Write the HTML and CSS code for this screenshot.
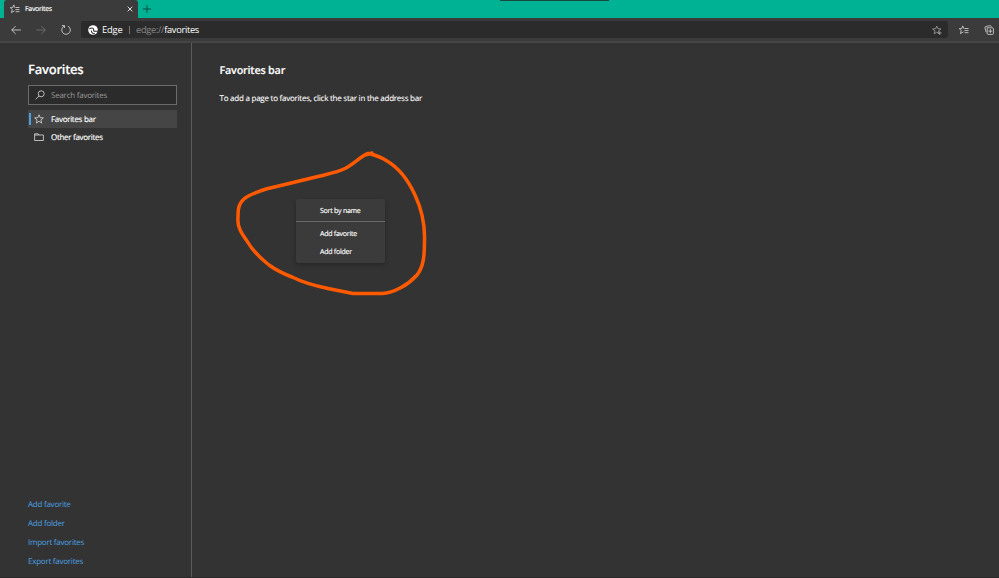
FILE: index.html
```html
<!DOCTYPE html>
<html lang="en">
<head>
<meta charset="utf-8">
<title>Favorites</title>
<link rel="stylesheet" href="styles.css">
</head>
<body>
<svg class="defs" width="0" height="0">
  <symbol id="star" viewBox="0 0 10 10"><path d="M5 .8 6.2 3.7 9.4 3.9 6.9 5.9 7.7 9.1 5 7.3 2.3 9.1 3.1 5.9.6 3.9 3.8 3.7Z"/></symbol>
  <symbol id="favs" viewBox="0 0 10 10"><path d="M5.2 3.6H4.8L3.7.9 2.7 3.6.3 3.7 2.2 5.5 1.5 8.6 4.5 6.8M5.6 3.5H9.5M5.4 5.6H9.5M5.6 7.7H9.5"/></symbol>
</svg>
<header class="tabstrip">
  <div class="tab">
    <svg class="tab-icon"><use href="#favs"/></svg>
    <span class="tab-title">Favorites</span>
    <svg class="close" viewBox="0 0 6 6"><path d="M.7.7 5.3 5.3M5.3.7.7 5.3"/></svg>
  </div>
  <svg class="plus" viewBox="0 0 8 8"><path d="M4 0V8M0 4H8"/></svg>
  <div class="handle"></div>
</header>
<nav class="toolbar">
  <svg class="nav" viewBox="0 0 10 10"><path d="M9.8 5H.7M4.6 1.1.7 5 4.6 8.9"/></svg>
  <svg class="nav dim" viewBox="0 0 10 10"><path d="M.2 5H9.3M5.4 1.1 9.3 5 5.4 8.9"/></svg>
  <svg class="nav" viewBox="0 0 10 10"><path d="M3.2 1.1A4.3 4.3 0 1 0 6.9 1.1M.9.6H3.5V3"/></svg>
  <div class="address">
    <svg class="edge" viewBox="0 0 10 10"><circle cx="5" cy="5" r="4.8"/><path d="M9.9 6.2H6.3Q5.3 5.8 5.7 4.6 5.4 3 4 3 2.6 3 1.4 4M3.4 5.6C3.3 7.5 4.7 8.7 6.7 8.5"/></svg>
    <span class="brand">Edge</span>
    <span class="divider"></span>
    <span class="url"><span class="scheme">edge://</span>favorites</span>
    <svg class="add-star" viewBox="0 0 10 10"><use href="#star" width="9.5" height="10"/><path d="M6 8H9.6M7.8 6.3V9.8"/></svg>
  </div>
  <svg class="tool"><use href="#favs"/></svg>
  <svg class="tool collections" viewBox="0 0 10 10"><path d="M3.2 2.8H8.4Q9.4 2.8 9.4 3.8V8.4Q9.4 9.4 8.4 9.4H4.2Q3.2 9.4 3.2 8.4ZM2.2 7.3 1 3Q.7 1.8 1.8 1.5L6.2.6Q7 .6 7.3 1.8M6.3 4.2V8M4.4 6.1H8.2"/></svg>
</nav>
<main class="page">
  <aside class="sidebar">
    <h1>Favorites</h1>
    <div class="search">
      <svg viewBox="0 0 10 10"><circle cx="6.2" cy="3.8" r="3"/><path d="M4 6 .6 9.4"/></svg>
      <span>Search favorites</span>
    </div>
    <div class="item selected"><svg><use href="#star"/></svg><span>Favorites bar</span></div>
    <div class="item"><svg viewBox="0 0 10 10"><path d="M.6 1.8H4.1L5 3H9.4V8.5H.6ZM.6 3H5"/></svg><span>Other favorites</span></div>
    <div class="links"><a>Add favorite</a><a>Add folder</a><a>Import favorites</a><a>Export favorites</a></div>
  </aside>
  <section class="content">
    <h2>Favorites bar</h2>
    <p>To add a page to favorites, click the star in the address bar</p>
  </section>
</main>
<div class="menu">
  <div class="menu-sort">Sort by name</div>
  <div>Add favorite</div>
  <div>Add folder</div>
</div>
<svg class="scribble" viewBox="225 140 215 165"><path d="M372 153.5 368 153.5C361 156 354 164 345 168.5C338 172 328 174 320 176L287 184L266 189C257 192 248 195 244 199C238 204 238 211 238 218C237 227 242 234 247 241C252 250 259 257 269 265C276 270 284 274 292 277C304 283 316 286 328 288.5L353 293.5H382C394 293 408 285 417 275C424 266 424.5 255 424.5 239C425 221 421 208 415 195C409 182 399 168 387 161C381 157 375 155 369 153.5M367 154.5 372 153"/></svg>
</body>
</html>
```

FILE: styles.css
```css
* { box-sizing: border-box; }
body { margin: 0; width: 999px; height: 578px; overflow: hidden; background: #333; color: #fff; font: 8px/12px "Open Sans", "Noto Sans", sans-serif; text-rendering: geometricPrecision; letter-spacing: -.24px; display: flex; flex-direction: column; border-bottom: 1px solid #292929; }
svg { fill: none; stroke: #ddd; stroke-width: .8; flex: none; display: block; }
.defs { position: absolute; }
span, a, h1, h2, p, .menu div { white-space: nowrap; }
.tabstrip { height: 18px; flex: none; background: #00b294; display: flex; padding-left: 4px; position: relative; }
.tab { width: 134px; background: #3b3b3b; border-radius: 3px 3px 0 0; display: flex; align-items: center; padding: 0 5px 0 6px; }
.tab-icon { width: 10px; height: 10px; }
.tab-title { font-size: 7px; margin-left: 5px; padding-top: 2px; letter-spacing: -.3px; flex: 1; -webkit-text-stroke: .15px; }
.close { width: 6px; height: 6px; stroke-width: 1; }
.plus { width: 8px; height: 8px; margin: 5px 0 0 5px; stroke: #064b40; stroke-width: 1; }
.handle { position: absolute; left: 500px; top: 0; width: 109px; height: 1px; background: #17483f; }
.toolbar { height: 25px; flex: none; background: #3b3b3b; border-bottom: 2px solid #454545; display: flex; align-items: center; padding-left: 11px; }
.nav { width: 10px; height: 10px; margin-right: 15px; }
.nav:nth-child(3) { margin-right: 15px; }
.dim { stroke: #777; }
.address { width: 867px; height: 17px; margin-left: -5px; background: #2b2b2b; border-radius: 2px; display: flex; align-items: center; padding: 0 6px 0 7px; font-size: 9.3px; }
.brand, .url { padding-top: 1px; }
.edge { width: 10px; height: 10px; stroke: #2b2b2b; stroke-width: 1.1; }
.edge circle { fill: #fff; stroke: none; }
.brand { margin-left: 4px; width: 22px; letter-spacing: -.15px; }
.divider { width: 1px; height: 8px; background: #777; margin-left: 5px; }
.url { margin-left: 6px; flex: 1; letter-spacing: -.32px; }
.scheme { color: #888; }
.add-star { width: 10px; height: 10px; stroke: #aaa; }
.tool { width: 10px; height: 10px; margin-left: 11px; }
.collections { margin-left: 15px; }
.page { flex: 1; display: flex; min-height: 0; }
.sidebar { width: 192px; border-right: 1px solid #5a5a5a; padding: 17px 14px 6px 28px; display: flex; flex-direction: column; }
h1 { font-size: 13px; line-height: 18px; font-weight: 600; margin: 0 0 7px; -webkit-text-stroke: .15px; }
.search { height: 20px; border: 1px solid #6b6b6b; background: #2b2b2b; display: flex; align-items: center; padding-left: 6px; color: #999; margin-bottom: 5px; flex: none; }
.search svg { width: 10px; height: 10px; margin-right: 6px; }
.search span, .item span { padding-top: 2px; }
.item { height: 18px; display: flex; align-items: center; padding-left: 6px; position: relative; -webkit-text-stroke: .15px; letter-spacing: -.3px; }
.item svg { width: 10px; height: 10px; margin-right: 7px; }
.selected { background: #454545; }
.selected::before { content: ""; position: absolute; left: 1px; top: 3px; width: 2px; height: 12px; background: #4ba0e1; }
.links { margin-top: auto; display: flex; flex-direction: column; color: #4ba0e1; }
.links a { height: 19px; line-height: 19px; }
.content { padding: 19px 0 0 27.5px; }
h2 { margin: 0; font-size: 10.8px; line-height: 18px; font-weight: 600; letter-spacing: -.2px; -webkit-text-stroke: .15px; }
p { margin: 13px 0 0; line-height: 12px; -webkit-text-stroke: .1px; }
.menu { position: absolute; left: 296px; top: 199px; width: 89px; height: 64px; background: #3b3b3b; border-radius: 2px; box-shadow: 0 2px 5px #0004; padding-top: 3px; font-size: 7px; -webkit-text-stroke: .15px; }
.menu div { height: 18px; line-height: 20px; padding-left: 24px; }
.menu .menu-sort { height: 20px; border-bottom: 1px solid #696969; margin-bottom: 3px; }
.scribble { position: absolute; left: 225px; top: 140px; width: 215px; height: 165px; stroke: #ff5a00; stroke-width: 3.5; stroke-linecap: round; stroke-linejoin: round; }
```
